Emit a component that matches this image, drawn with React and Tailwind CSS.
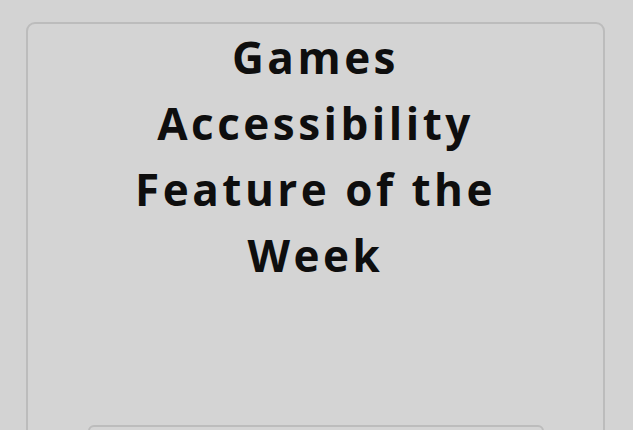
export default function App() {
  return (
    <div className="w-[633px] h-[430px] overflow-hidden bg-[#d3d3d3] pt-[22px] pl-[26px] pr-[28px]">
      <div className="h-[460px] rounded-[9px] border-2 border-[#bcbcbc] bg-[#d4d4d4] flex flex-col items-center">
        <h1
          className="w-[480px] text-center text-[#0e0e0e] font-bold text-[44px] leading-[66px] tracking-[3.5px]"
          style={{ fontFamily: '"Open Sans", sans-serif' }}
        >
          Games Accessibility Feature of the Week
        </h1>
        <div className="mt-[137px] w-[456px] h-[80px] rounded-[6px] border-2 border-[#bcbcbc]" />
      </div>
    </div>
  );
}
